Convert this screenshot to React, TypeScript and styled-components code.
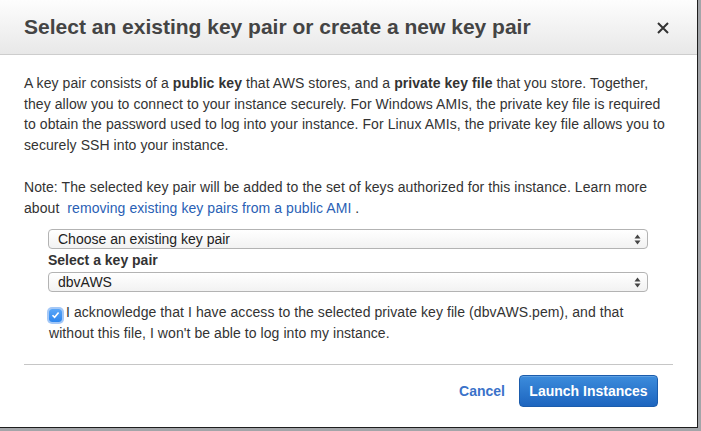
import React from "react";
import styled, { createGlobalStyle } from "styled-components";

const Global = createGlobalStyle`
  html, body { margin: 0; padding: 0; background: #a3a5a9; }
  body { font-family: "Liberation Sans", Arial, Helvetica, sans-serif; }
`;

const Screen = styled.div`
  width: 701px;
  height: 431px;
  overflow: hidden;
  background: #a3a5a9;
`;

const Modal = styled.div`
  width: 698px;
  height: 428px;
  box-sizing: border-box;
  background: #fff;
  border-right: 1px solid #1e1e1e;
  border-bottom: 1px solid #1e1e1e;
  display: flex;
  flex-direction: column;
`;

const Header = styled.div`
  height: 54px;
  flex: none;
  display: flex;
  align-items: center;
  justify-content: space-between;
  padding: 0 27px 0 24px;
  background: linear-gradient(#fdfdfd, #e8e8e8);
  border-bottom: 1px solid #cdcdcd;
`;

const Title = styled.h2`
  margin: 0;
  font-size: 21px;
  font-weight: bold;
  color: #444;
`;

const Close = styled.button`
  border: 0;
  padding: 0;
  background: none;
  width: 14px;
  height: 14px;
  display: flex;
  margin-top: 2px;
`;

const Body = styled.div`
  padding: 18px 24px 0;
  font-size: 14px;
  line-height: 20.7px;
  letter-spacing: 0.07px;
  color: #333;
`;

const Para = styled.p<{ $gap?: number }>`
  margin: ${(p) => p.$gap ?? 0}px 0 0;
`;

const Link = styled.a`
  color: #2a5fb5;
  text-decoration: none;
`;

const Form = styled.div`
  margin: 11px 0 0 24px;
  width: 600px;
`;

const Select = styled.div`
  height: 20px;
  box-sizing: border-box;
  border: 1px solid #b3b3b3;
  border-radius: 4px;
  background: linear-gradient(#ffffff, #f2f2f2);
  display: flex;
  align-items: center;
  justify-content: space-between;
  padding: 0 6px 0 9px;
  font-size: 14px;
  line-height: 18px;
  letter-spacing: 0;
  color: #222;
`;

const Label = styled.div`
  font-size: 14px;
  font-weight: bold;
  line-height: 23px;
  letter-spacing: 0;
  color: #333;
`;

const Ack = styled.div`
  margin-top: 10px;
  margin-left: 1px;
  width: 640px;
`;

const Check = styled.span`
  display: inline-flex;
  align-items: center;
  justify-content: center;
  width: 13px;
  height: 13px;
  border-radius: 3px;
  background: linear-gradient(#5aa6f8, #2d86ee);
  box-shadow: 0 0 0 2px rgba(90, 155, 240, 0.55);
  vertical-align: -2px;
  margin-right: 4px;
`;

const Divider = styled.div`
  margin: 20px 24px 0;
  border-top: 1px solid #c6c6c6;
`;

const Footer = styled.div`
  display: flex;
  justify-content: flex-end;
  align-items: center;
  gap: 14px;
  padding: 10px 39px 0 0;
`;

const Cancel = styled.button`
  border: 0;
  background: none;
  padding: 0;
  font-family: inherit;
  font-size: 14px;
  font-weight: bold;
  color: #3a72c9;
`;

const Primary = styled.button`
  height: 32px;
  width: 139px;
  box-sizing: border-box;
  border: 1px solid #1b5cac;
  border-radius: 4px;
  background: linear-gradient(#3c8cdc, #1d65bf);
  box-shadow: inset 0 1px 0 rgba(255, 255, 255, 0.18);
  color: #fff;
  font-family: inherit;
  font-size: 14px;
  font-weight: bold;
  padding: 0;
`;

const Arrows = () => (
  <svg width="7" height="11" viewBox="0 0 7 11">
    <path d="M3.5 0.5 L6.5 4.5 H0.5 Z" fill="#444" />
    <path d="M3.5 10.5 L6.5 6.5 H0.5 Z" fill="#444" />
  </svg>
);

export default function App() {
  return (
    <Screen>
      <Global />
      <Modal>
        <Header>
          <Title>Select an existing key pair or create a new key pair</Title>
          <Close aria-label="Close">
            <svg width="14" height="14" viewBox="0 0 14 14">
              <path d="M2 2 L12 12 M12 2 L2 12" stroke="#333" strokeWidth="2" />
            </svg>
          </Close>
        </Header>
        <Body>
          <Para>
            A key pair consists of a <b>public key</b> that AWS stores, and a <b>private key file</b> that you store. Together,
            <br />
            they allow you to connect to your instance securely. For Windows AMIs, the private key file is required
            <br />
            to obtain the password used to log into your instance. For Linux AMIs, the private key file allows you to
            <br />
            securely SSH into your instance.
          </Para>
          <Para $gap={21}>
            Note: The selected key pair will be added to the set of keys authorized for this instance. Learn more
            <br />
            about&nbsp; <Link href="#">removing existing key pairs from a public AMI</Link> .
          </Para>
          <Form>
            <Select>
              <span>Choose an existing key pair</span>
              <Arrows />
            </Select>
            <Label>Select a key pair</Label>
            <Select>
              <span>dbvAWS</span>
              <Arrows />
            </Select>
            <Ack>
              <Check>
                <svg width="9" height="8" viewBox="0 0 9 8">
                  <path d="M1.5 4.2 L3.6 6.3 L7.6 1.5" stroke="#fff" strokeWidth="1.6" fill="none" />
                </svg>
              </Check>
              I acknowledge that I have access to the selected private key file (dbvAWS.pem), and that
              <br />
              without this file, I won't be able to log into my instance.
            </Ack>
          </Form>
        </Body>
        <Divider />
        <Footer>
          <Cancel>Cancel</Cancel>
          <Primary>Launch Instances</Primary>
        </Footer>
      </Modal>
    </Screen>
  );
}
